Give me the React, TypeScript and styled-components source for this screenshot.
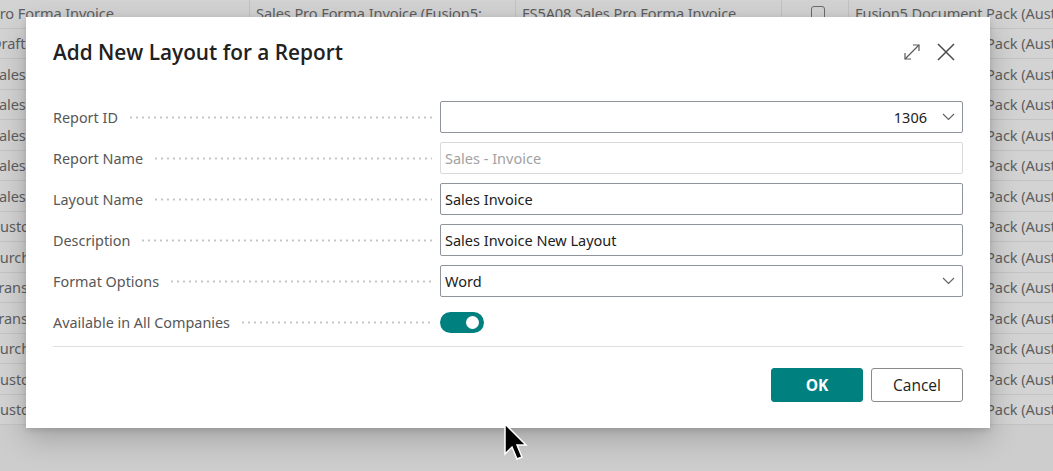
import React, { FC } from "react";
import styled, { createGlobalStyle } from "styled-components";

const GlobalStyle = createGlobalStyle`
    html, body {
        margin: 0;
        padding: 0;
        background: #cfcfcf;
        font-family: "Noto Sans", "Open Sans", sans-serif;
    }
`;

const Page = styled.div`
    position: relative;
    width: 1053px;
    height: 471px;
    overflow: hidden;
    background: #cdcdcd;
`;

const Table = styled.div`
    margin-top: -2px;
    margin-left: -9px;
    display: flex;
    flex-direction: column;
`;

const Row = styled.div`
    display: grid;
    grid-template-columns: 259px 266px 266px 67px 1fr;
    height: 30.5px;
    background: #d3d3d3;
    border-bottom: 1px solid #c3c3c3;
    box-sizing: border-box;
`;

const Cell = styled.div<{ $center?: boolean }>`
    display: flex;
    align-items: center;
    justify-content: ${(p) => (p.$center ? "center" : "flex-start")};
    border-right: 1px solid #c3c3c3;
    font-size: 14.6px;
    letter-spacing: -0.1px;
    color: #5e5e5e;
    white-space: nowrap;
    overflow: hidden;
    &:not(:first-child) {
        padding-left: 6px;
    }
    &:last-child {
        border-right: none;
    }
`;

const Truncated = styled.span`
    display: block;
    max-width: 250px;
    overflow: hidden;
    text-overflow: ellipsis;
`;

const CheckBox = styled.span`
    width: 12px;
    height: 12px;
    border: 1px solid #6a6a6a;
    border-radius: 3px;
`;

const Dialog = styled.div`
    position: absolute;
    left: 26px;
    top: 17px;
    width: 964px;
    height: 411px;
    box-sizing: border-box;
    background: #ffffff;
    box-shadow: 0 10px 28px rgba(0, 0, 0, 0.22), 0 2px 6px rgba(0, 0, 0, 0.12);
    padding: 21px 27px 26px 27px;
    display: flex;
    flex-direction: column;
`;

const Header = styled.div`
    display: flex;
    align-items: center;
    justify-content: space-between;
    height: 28px;
`;

const Title = styled.h1`
    margin: 0;
    font-family: "Open Sans", "Noto Sans", sans-serif;
    font-size: 20.8px;
    font-weight: 600;
    color: #212121;
`;

const HeaderIcons = styled.div`
    display: flex;
    align-items: center;
    gap: 16px;
    margin-right: 8px;
    color: #555555;
`;

const Fields = styled.div`
    margin-top: 35px;
    display: flex;
    flex-direction: column;
    gap: 9px;
`;

const FieldRow = styled.div`
    display: grid;
    grid-template-columns: 387px 1fr;
    height: 32px;
    align-items: center;
`;

const LabelWrap = styled.div`
    display: flex;
    align-items: center;
    padding-right: 8px;
`;

const Label = styled.span`
    font-size: 14.4px;
    color: #575757;
    white-space: nowrap;
`;

const Leader = styled.span`
    flex: 1;
    height: 3px;
    margin-left: 10px;
    background-image: radial-gradient(circle, #c4c4c4 0.9px, transparent 1.3px);
    background-size: 6px 3px;
    background-repeat: repeat-x;
`;

const InputBox = styled.div<{ $disabled?: boolean; $align?: string }>`
    height: 32px;
    box-sizing: border-box;
    border: 1px solid ${(p) => (p.$disabled ? "#dadada" : "#8e939c")};
    border-radius: 2px;
    padding: 0 7px 0 4px;
    display: flex;
    align-items: center;
    justify-content: ${(p) => p.$align || "flex-start"};
    gap: 15px;
    font-size: 14.5px;
    color: ${(p) => (p.$disabled ? "#a2a2a2" : "#212121")};
`;

const Value = styled.span<{ $grow?: boolean }>`
    flex: ${(p) => (p.$grow ? 1 : "none")};
`;

const Toggle = styled.div<{ $on?: boolean }>`
    width: 44px;
    height: 21px;
    border-radius: 11px;
    background: ${(p) => (p.$on ? "#00807f" : "#ffffff")};
    display: flex;
    align-items: center;
    justify-content: ${(p) => (p.$on ? "flex-end" : "flex-start")};
    padding: 0 5px;
    box-sizing: border-box;
`;

const Knob = styled.span`
    width: 13px;
    height: 13px;
    border-radius: 50%;
    background: #ffffff;
`;

const Divider = styled.div`
    margin-top: 8px;
    height: 1px;
    background: #dedede;
`;

const Footer = styled.div`
    margin-top: 21px;
    display: flex;
    justify-content: flex-end;
    gap: 8px;
`;

const Button = styled.button<{ $primary?: boolean }>`
    width: 92px;
    height: 34px;
    box-sizing: border-box;
    border-radius: 3px;
    font-family: "Open Sans", "Noto Sans", sans-serif;
    font-size: 15.5px;
    font-weight: ${(p) => (p.$primary ? 700 : 400)};
    color: ${(p) => (p.$primary ? "#ffffff" : "#212121")};
    background: ${(p) => (p.$primary ? "#00807f" : "#ffffff")};
    border: 1px solid ${(p) => (p.$primary ? "#00807f" : "#8a8a8a")};
    padding: 0;
`;

const Cursor = styled.svg`
    position: absolute;
    left: 503px;
    top: 422px;
`;

const Chevron: FC = () => (
    <svg width="13" height="8" viewBox="0 0 13 8" fill="none">
        <path d="M1 1 L6.5 6.5 L12 1" stroke="#606060" strokeWidth="1.1" />
    </svg>
);

const rows = [
    "Pro Forma Invoice",
    "Draft Invoice",
    "Sales - Quote",
    "Sales - Order Confirmation",
    "Sales - Invoice",
    "Sales - Credit Memo",
    "Sales - Shipment",
    "Customer - Statement",
    "Purchase - Order",
    "Transfer Order",
    "Transfer Shipment",
    "Purchase - Quote",
    "Customer - Top 10 List",
    "Customer - Order Summary"
];

const App: FC = () => {
    return (
        <Page>
            <GlobalStyle />
            <Table>
                {rows.map((r, i) => (
                    <Row key={i}>
                        <Cell>{r}</Cell>
                        <Cell>
                            <Truncated>Sales Pro Forma Invoice (Fusion5: Document Pack)</Truncated>
                        </Cell>
                        <Cell>FS5A08 Sales Pro Forma Invoice</Cell>
                        <Cell $center>
                            <CheckBox />
                        </Cell>
                        <Cell>Fusion5 Document Pack (Australia)</Cell>
                    </Row>
                ))}
            </Table>

            <Dialog>
                <Header>
                    <Title>Add New Layout for a Report</Title>
                    <HeaderIcons>
                        <svg width="18" height="18" viewBox="0 0 18 18" fill="none" stroke="#5a5a5a" strokeWidth="1.2">
                            <path d="M2 16 L16 2" />
                            <path d="M10 2 H16 V8" />
                            <path d="M2 10 V16 H8" />
                        </svg>
                        <svg width="18" height="18" viewBox="0 0 18 18" fill="none" stroke="#4a4a4a" strokeWidth="1.5">
                            <path d="M1 1 L17 17 M17 1 L1 17" />
                        </svg>
                    </HeaderIcons>
                </Header>

                <Fields>
                    <FieldRow>
                        <LabelWrap>
                            <Label>Report ID</Label>
                            <Leader />
                        </LabelWrap>
                        <InputBox $align="flex-end">
                            <Value>1306</Value>
                            <Chevron />
                        </InputBox>
                    </FieldRow>
                    <FieldRow>
                        <LabelWrap>
                            <Label>Report Name</Label>
                            <Leader />
                        </LabelWrap>
                        <InputBox $disabled>Sales - Invoice</InputBox>
                    </FieldRow>
                    <FieldRow>
                        <LabelWrap>
                            <Label>Layout Name</Label>
                            <Leader />
                        </LabelWrap>
                        <InputBox>Sales Invoice</InputBox>
                    </FieldRow>
                    <FieldRow>
                        <LabelWrap>
                            <Label>Description</Label>
                            <Leader />
                        </LabelWrap>
                        <InputBox>Sales Invoice New Layout</InputBox>
                    </FieldRow>
                    <FieldRow>
                        <LabelWrap>
                            <Label>Format Options</Label>
                            <Leader />
                        </LabelWrap>
                        <InputBox>
                            <Value $grow>Word</Value>
                            <Chevron />
                        </InputBox>
                    </FieldRow>
                    <FieldRow>
                        <LabelWrap>
                            <Label>Available in All Companies</Label>
                            <Leader />
                        </LabelWrap>
                        <Toggle $on>
                            <Knob />
                        </Toggle>
                    </FieldRow>
                </Fields>

                <Divider />

                <Footer>
                    <Button $primary>OK</Button>
                    <Button>Cancel</Button>
                </Footer>
            </Dialog>

            <Cursor width="26" height="42" viewBox="0 0 26 42">
                <path d="M2 2 L2 32 L9 25 L14 37 L19 35 L14 23 L23 23 Z" fill="#000" stroke="#fff" strokeWidth="1.5" />
            </Cursor>
        </Page>
    );
};

export default App;
